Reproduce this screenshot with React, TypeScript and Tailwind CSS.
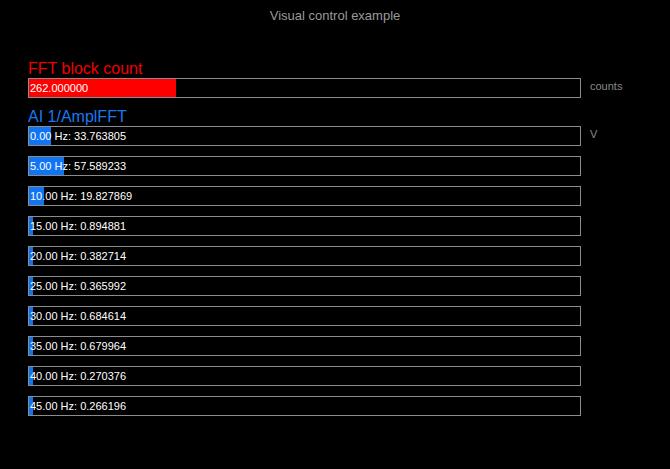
import React from 'react';

// Spectrum readout, one bar per FFT bin
const fftBins = [
  { hz: '0.00', value: 33.763805 },
  { hz: '5.00', value: 57.589233 },
  { hz: '10.00', value: 19.827869 },
  { hz: '15.00', value: 0.894881 },
  { hz: '20.00', value: 0.382714 },
  { hz: '25.00', value: 0.365992 },
  { hz: '30.00', value: 0.684614 },
  { hz: '35.00', value: 0.679964 },
  { hz: '40.00', value: 0.270376 },
  { hz: '45.00', value: 0.266196 },
];

// bar fill keeps a small stub even for tiny values
const fillWidth = (v: number) => 4 + v * 0.546;

const Bar = ({ value, text, fill, unit }: { value: number; text: string; fill: string; unit?: string }) => (
  <div className="flex items-start">
    <div className="relative w-[553px] h-[20px] border border-[#8c8c8c] bg-black shrink-0">
      <div className={`absolute left-0 top-0 bottom-0 ${fill}`} style={{ width: fillWidth(value) }} />
      <span className="absolute left-[1px] top-0 h-full flex items-center text-[11px] text-white leading-none">{text}</span>
    </div>
    {unit && <span className="ml-[9px] mt-[1px] text-[11px] leading-[14px] text-[#8a8a8a]">{unit}</span>}
  </div>
);

const App = () => {
  return (
    <div className="bg-black w-[670px] h-[469px] overflow-hidden" style={{ fontFamily: '"Liberation Sans", Arial, sans-serif' }}>
      <h1 className="text-center text-[13px] leading-[16px] pt-[8px] text-[#9a9a9a]">Visual control example</h1>

      <div className="pl-[28px] pt-[35px]">
        <div className="text-[16px] leading-[19px] text-[#f00000]">FFT block count</div>
        <Bar value={262} text="262.000000" fill="bg-[#ff0000]" unit="counts" />

        <div className="mt-[9px] text-[16px] leading-[19px] text-[#1a78f0]">AI 1/AmplFFT</div>
        <div className="flex flex-col gap-[10px]">
          {fftBins.map((bin, i) => (
            <Bar
              key={bin.hz}
              value={bin.value}
              text={`${bin.hz} Hz: ${bin.value.toFixed(6)}`}
              fill="bg-[#1174f2]"
              unit={i === 0 ? 'V' : undefined}
            />
          ))}
        </div>
      </div>
    </div>
  );
};

export default App;
